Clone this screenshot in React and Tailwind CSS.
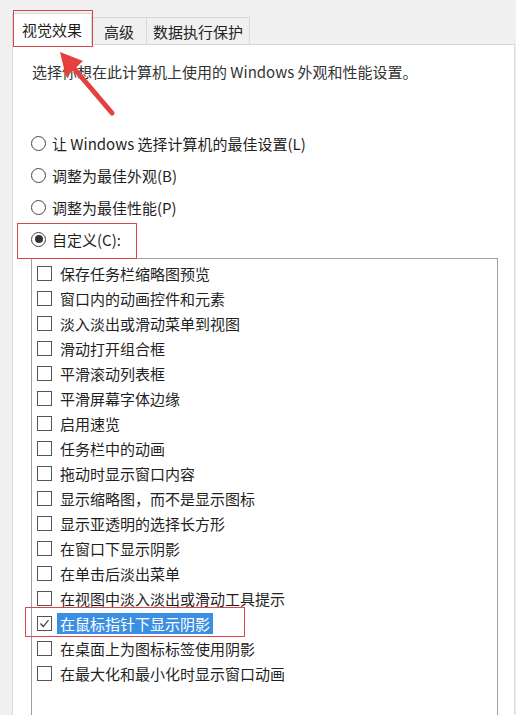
import React from 'react';

const radios = [
  { label: '让 Windows 选择计算机的最佳设置(L)', checked: false },
  { label: '调整为最佳外观(B)', checked: false },
  { label: '调整为最佳性能(P)', checked: false },
  { label: '自定义(C):', checked: true },
];

const options = [
  '保存任务栏缩略图预览',
  '窗口内的动画控件和元素',
  '淡入淡出或滑动菜单到视图',
  '滑动打开组合框',
  '平滑滚动列表框',
  '平滑屏幕字体边缘',
  '启用速览',
  '任务栏中的动画',
  '拖动时显示窗口内容',
  '显示缩略图，而不是显示图标',
  '显示亚透明的选择长方形',
  '在窗口下显示阴影',
  '在单击后淡出菜单',
  '在视图中淡入淡出或滑动工具提示',
  '在鼠标指针下显示阴影',
  '在桌面上为图标标签使用阴影',
  '在最大化和最小化时显示窗口动画',
];

const Radio = ({ checked }) => (
  <span className="w-[15px] h-[15px] rounded-full border border-[#444] bg-white flex items-center justify-center shrink-0">
    {checked && <span className="w-[8px] h-[8px] rounded-full bg-[#333]" />}
  </span>
);

const Checkbox = ({ checked }) => (
  <span className="w-[15px] h-[15px] border border-[#555] bg-white flex items-center justify-center shrink-0">
    {checked && (
      <svg width="11" height="11" viewBox="0 0 11 11">
        <path d="M1.5 5.5 L4.3 8.5 L9.5 2" fill="none" stroke="#333" strokeWidth="1.2" />
      </svg>
    )}
  </span>
);

export default function App() {
  return (
    <div className="relative w-[516px] h-[715px] overflow-hidden bg-[#f0f0f0] text-[15px] text-[#1f1f1f] font-['Microsoft_YaHei','Noto_Sans_CJK_SC',sans-serif]">
      {/* tabs */}
      <div className="flex items-start pt-[13px] pl-[12px] h-[44px]">
        <div className="relative z-10 h-[32px] w-[80px] bg-white border border-b-0 border-[#d9d9d9] flex items-center justify-center leading-none">
          视觉效果
        </div>
        <div className="mt-[4px] h-[27px] w-[55px] border border-l-0 border-b-0 border-[#d9d9d9] flex items-center justify-center leading-none">
          高级
        </div>
        <div className="mt-[4px] h-[27px] w-[103px] border border-l-0 border-b-0 border-[#d9d9d9] flex items-center justify-center leading-none">
          数据执行保护
        </div>
      </div>

      {/* panel */}
      <div className="ml-[12px] w-[503px] h-[700px] bg-white border border-[#d9d9d9]">
        <p className="pt-[16px] pl-[19px] leading-[22px] text-[#333]">
          选择你想在此计算机上使用的 Windows 外观和性能设置。
        </p>

        <div className="mt-[44px] pl-[18px]">
          {radios.map((r) => (
            <div key={r.label} className="h-[32px] flex items-center gap-[6px]">
              <Radio checked={r.checked} />
              <span className="leading-none">{r.label}</span>
            </div>
          ))}
        </div>

        <div className="mt-[3px] ml-[18px] w-[467px] h-[470px] border border-[#a0a0a0] pt-[2px]">
          {options.map((o) => {
            const active = o === '在鼠标指针下显示阴影';
            return (
              <div key={o} className="h-[25px] flex items-center gap-[5px] pl-[5px]">
                <Checkbox checked={active} />
                <span
                  className={`h-[21px] leading-[21px] px-[3px] ${
                    active ? 'bg-[#3b8fe3] text-white' : ''
                  }`}
                >
                  {o}
                </span>
              </div>
            );
          })}
        </div>
      </div>

      {/* red annotations */}
      <div className="absolute left-[13px] top-[10px] w-[80px] h-[37px] border-[1.5px] border-[#d9474b] z-20" />
      <div className="absolute left-[17px] top-[223px] w-[120px] h-[36px] border-[1.5px] border-[#d9474b]" />
      <div className="absolute left-[25px] top-[607px] w-[220px] h-[30px] border-[1.5px] border-[#d9474b]" />

      <svg className="absolute left-0 top-0 z-30" width="140" height="130" viewBox="0 0 140 130">
        <line x1="112" y1="113" x2="72" y2="66" stroke="#e5403d" strokeWidth="5" strokeLinecap="round" />
        <polygon points="60,52 83,61 66,77" fill="#e5403d" />
      </svg>
    </div>
  );
}
